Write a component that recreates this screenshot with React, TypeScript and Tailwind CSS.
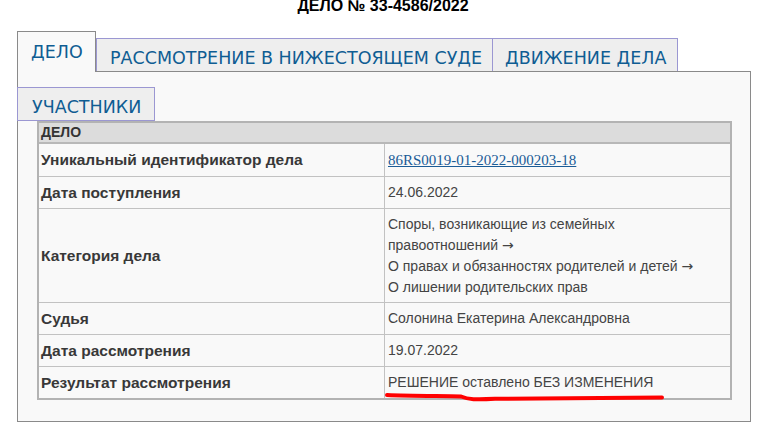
import React from "react";

const Arrow = () => (
  <span style={{ fontFamily: '"DejaVu Sans", sans-serif' }} className="text-[14px]">
    →
  </span>
);

const rows: { label: string; value: React.ReactNode; tall?: boolean }[] = [
  {
    label: "Уникальный идентификатор дела",
    value: (
      <a
        href="#"
        className="text-[#1b5c97] underline text-[15px]"
        style={{ fontFamily: '"Liberation Serif", serif' }}
      >
        86RS0019-01-2022-000203-18
      </a>
    ),
  },
  { label: "Дата поступления", value: "24.06.2022" },
  {
    label: "Категория дела",
    tall: true,
    value: (
      <div className="leading-[21px]">
        <div>Споры, возникающие из семейных</div>
        <div>
          правоотношений <Arrow />
        </div>
        <div>
          О правах и обязанностях родителей и детей <Arrow />
        </div>
        <div>О лишении родительских прав</div>
      </div>
    ),
  },
  { label: "Судья", value: "Солонина Екатерина Александровна" },
  { label: "Дата рассмотрения", value: "19.07.2022" },
  { label: "Результат рассмотрения", value: "РЕШЕНИЕ оставлено БЕЗ ИЗМЕНЕНИЯ" },
];

export default function App() {
  const tabFont = { fontFamily: '"DejaVu Sans", Verdana, sans-serif' };
  return (
    <div
      className="relative w-[766px] h-[422px] bg-white overflow-hidden"
      style={{ fontFamily: '"Liberation Sans", Arial, sans-serif' }}
    >
      <div className="mt-[-3px] h-[18px] leading-[18px] text-center text-[16px] font-bold text-black">
        ДЕЛО № 33-4586/2022
      </div>

      <div className="ml-[17px] mr-[15px] mt-[16px]">
        {/* Tab row */}
        <div className="flex items-end h-[40px] relative z-10" style={tabFont}>
          <div className="w-[79px] h-[41px] mb-[-1px] border border-b-0 border-[#8a8a8a] bg-[#f9f9f9] pl-[13px] pt-[7px] text-[17.5px] text-[#0f5d93] whitespace-nowrap">
            ДЕЛО
          </div>
          <div className="w-[397px] h-[33px] border border-b-0 border-[#9b97d2] bg-[#eeeeee] pl-[13px] pt-[6px] text-[17.5px] text-[#0f5d93] whitespace-nowrap overflow-hidden">
            РАССМОТРЕНИЕ В НИЖЕСТОЯЩЕМ СУДЕ
          </div>
          <div className="ml-[-1px] w-[186px] h-[33px] border border-b-0 border-[#9b97d2] bg-[#eeeeee] pl-[12px] pt-[6px] text-[17.5px] text-[#0f5d93] whitespace-nowrap overflow-hidden">
            ДВИЖЕНИЕ ДЕЛА
          </div>
        </div>

        {/* Panel */}
        <div className="border border-[#8a8a8a] bg-[#f9f9f9] h-[351px] pt-[15px]">
          <div
            className="ml-[-1px] w-[138px] h-[34px] border border-[#9b97d2] bg-[#eeeeee] pl-[14px] pt-[6px] text-[17.5px] text-[#0f5d93] whitespace-nowrap"
            style={tabFont}
          >
            УЧАСТНИКИ
          </div>

          <div className="ml-[19px] w-[695px] border-2 border-[#b3b3b3]">
            <div className="h-[19px] leading-[19px] bg-[#dcdcdc] pl-[2px] font-bold text-[14px] text-[#333] border-b-2 border-[#b8b8b8] box-content">
              ДЕЛО
            </div>
            {rows.map((r, i) => (
              <div
                key={i}
                className={`flex ${i > 0 ? "border-t border-[#c2c2c2]" : ""} ${
                  r.tall ? "h-[94px]" : "h-[32px]"
                }`}
              >
                <div className="w-[346px] shrink-0 border-r border-[#c2c2c2] pl-[2px] flex items-center font-bold text-[#383838] text-[15.5px] whitespace-nowrap">
                  {r.label}
                </div>
                <div className="flex-1 pl-[3px] flex items-center text-[#444] text-[14px]">
                  {r.value}
                </div>
              </div>
            ))}
          </div>
        </div>
      </div>

      <svg
        className="absolute left-0 top-0 pointer-events-none"
        width="766"
        height="422"
        viewBox="0 0 766 422"
      >
        <path
          d="M387 395 C 410 396, 440 396, 461 396.5 C 468 399.5, 476 399.8, 495 398.8 C 560 398.2, 620 397.8, 662 397.4"
          fill="none"
          stroke="#ff0000"
          strokeWidth="4"
          strokeLinecap="round"
        />
      </svg>
    </div>
  );
}
